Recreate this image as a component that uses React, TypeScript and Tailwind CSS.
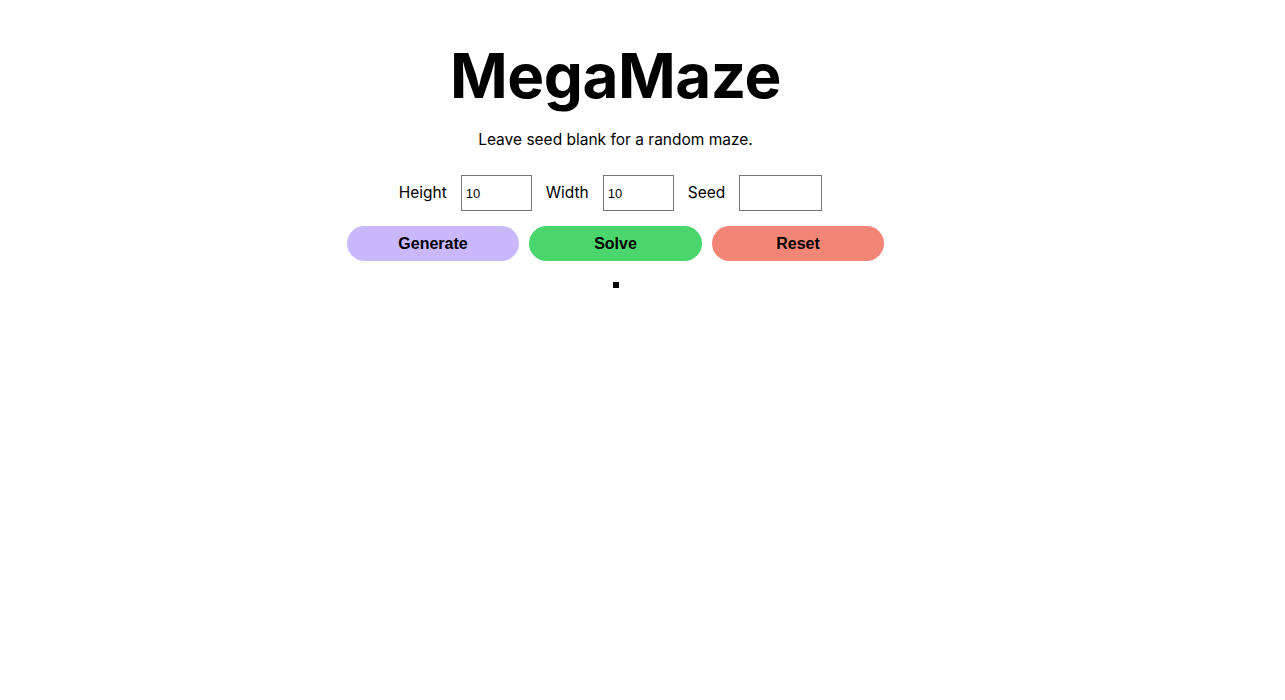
import React, { useState } from 'react';

export default function App() {
  const [height, setHeight] = useState('10');
  const [width, setWidth] = useState('10');
  const [seed, setSeed] = useState('');

  return (
    <div className="min-h-screen bg-white text-black font-['Inter','Liberation_Sans',sans-serif]">
      <div className="w-[1231px] flex flex-col items-center pt-[38px]">
        <h1 className="text-[62px] leading-[76px] font-bold tracking-[-0.5px]">MegaMaze</h1>
        <p className="mt-[16px] text-[15.5px] leading-[20px]">Leave seed blank for a random maze.</p>

        <div className="mt-[25px] flex items-center text-[15.5px]">
          <label className="mr-[14px]">Height</label>
          <input
            value={height}
            onChange={(e) => setHeight(e.target.value)}
            className="w-[71px] h-[36px] border border-[#767676] px-[4px] text-[13px] font-['Liberation_Sans',sans-serif] outline-none"
          />
          <label className="ml-[14px] mr-[14px]">Width</label>
          <input
            value={width}
            onChange={(e) => setWidth(e.target.value)}
            className="w-[71px] h-[36px] border border-[#767676] px-[4px] text-[13px] font-['Liberation_Sans',sans-serif] outline-none"
          />
          <label className="ml-[14px] mr-[14px]">Seed</label>
          <input
            value={seed}
            onChange={(e) => setSeed(e.target.value)}
            className="w-[83px] h-[36px] mr-[10px] border border-[#767676] px-[4px] text-[13px] font-['Liberation_Sans',sans-serif] outline-none"
          />
        </div>

        <div className="mt-[15px] flex gap-[10px] font-['Liberation_Sans',sans-serif] font-bold text-[16px]">
          <button className="w-[172px] h-[35px] rounded-full bg-[#c9b8fc]">Generate</button>
          <button className="w-[173px] h-[35px] rounded-full bg-[#4ad66d]">Solve</button>
          <button className="w-[172px] h-[35px] rounded-full bg-[#f38576]">Reset</button>
        </div>

        <div className="mt-[21px] w-[6px] h-[6px] bg-black" />
      </div>
    </div>
  );
}
